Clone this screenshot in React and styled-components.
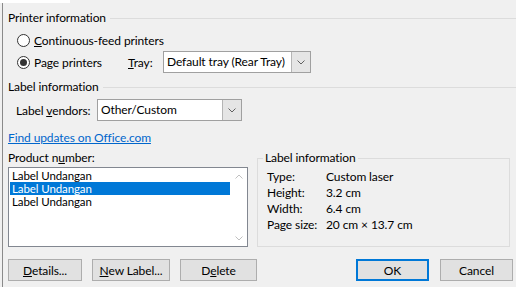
import React from "react";
import styled, { createGlobalStyle } from "styled-components";

const GlobalStyle = createGlobalStyle`
  html, body {
    margin: 0;
    padding: 0;
    background: #f0f0f0;
  }
  body {
    font-family: Lato, "Liberation Sans", sans-serif;
    font-size: 12px;
    letter-spacing: -0.1px;
    color: #000;
  }
`;

const Page = styled.div`
  width: 516px;
  height: 287px;
  overflow: hidden;
  background: #f0f0f0;
`;

const TabEdge = styled.div`
  width: 70px;
  height: 3px;
  background: #fff;
`;

const Window = styled.div`
  margin-left: 2px;
  height: 284px;
  box-sizing: border-box;
  border-left: 1px solid #8a8a8a;
  padding: 7px 0 0 5px;
  display: flex;
  flex-direction: column;
`;

const Header = styled.div`
  display: flex;
  align-items: center;
  gap: 4px;
  height: 16px;
  line-height: 16px;
  margin-top: ${(p) => p.$top || 0}px;
  white-space: nowrap;
  &::after {
    content: "";
    flex: 1;
    height: 1px;
    background: #dcdcdc;
  }
`;

const Row = styled.div`
  display: flex;
  align-items: center;
  height: 22px;
  margin-top: ${(p) => p.$top || 0}px;
  padding-left: ${(p) => p.$indent || 0}px;
  white-space: nowrap;
`;

const Radio = styled.span`
  width: 13px;
  height: 13px;
  box-sizing: border-box;
  border: 1px solid #333;
  border-radius: 50%;
  background: #fff;
  display: flex;
  align-items: center;
  justify-content: center;
  margin-right: 4px;
  flex: none;
  &::after {
    content: "";
    width: 7px;
    height: 7px;
    border-radius: 50%;
    background: ${(p) => (p.$checked ? "#333" : "transparent")};
  }
`;

const Option = styled.span`
  display: flex;
  align-items: center;
  width: ${(p) => (p.$width ? `${p.$width}px` : "auto")};
`;

const FieldLabel = styled.span`
  width: ${(p) => p.$width}px;
  flex: none;
`;

const Combo = styled.div`
  width: ${(p) => p.$width}px;
  height: 22px;
  box-sizing: border-box;
  border: 1px solid #a0a0a0;
  background: #fff;
  display: flex;
  align-items: stretch;
`;

const ComboText = styled.span`
  flex: 1;
  padding-left: 3px;
  line-height: 20px;
  overflow: hidden;
`;

const ComboButton = styled.span`
  width: 18px;
  background: #e5e5e5;
  border-left: 1px solid #b5b5b5;
  display: flex;
  align-items: center;
  justify-content: center;
`;

const Link = styled.a`
  display: block;
  height: 16px;
  line-height: 16px;
  margin-top: 9px;
  color: #0066cc;
  text-decoration: underline;
  align-self: flex-start;
`;

const Lower = styled.div`
  display: flex;
  gap: 9px;
  margin-top: 4px;
`;

const ProductColumn = styled.div`
  width: 240px;
  display: flex;
  flex-direction: column;
`;

const Caption = styled.div`
  height: 16px;
  line-height: 16px;
`;

const ListBox = styled.div`
  margin-top: 1px;
  height: 80px;
  box-sizing: border-box;
  border: 1px solid #828790;
  background: #fff;
  display: flex;
`;

const Items = styled.div`
  flex: 1;
  padding: 1px 0 0 1px;
`;

const Item = styled.div`
  height: 13px;
  line-height: 13px;
  font-size: 11.5px;
  padding-left: 2px;
  background: ${(p) => (p.$selected ? "#0078d7" : "transparent")};
  color: ${(p) => (p.$selected ? "#fff" : "#000")};
`;

const ScrollBar = styled.div`
  width: 17px;
  display: flex;
  flex-direction: column;
  justify-content: space-between;
  align-items: center;
  padding: 6px 0 5px;
`;

const GroupBox = styled.fieldset`
  width: 253px;
  height: 97px;
  box-sizing: border-box;
  margin: 0;
  padding: 3px 5px 0;
  border: 1px solid #dcdcdc;
  legend {
    padding: 0 2px;
    line-height: 16px;
  }
`;

const InfoGrid = styled.div`
  display: grid;
  grid-template-columns: 59px auto;
  grid-auto-rows: 16px;
  line-height: 16px;
  margin-left: 4px;
`;

const Buttons = styled.div`
  display: flex;
  justify-content: space-between;
  margin-top: 12px;
  padding-right: 3px;
`;

const ButtonGroup = styled.div`
  display: flex;
  gap: ${(p) => p.$gap}px;
`;

const Button = styled.button`
  width: ${(p) => p.$width}px;
  height: 22px;
  box-sizing: border-box;
  padding: 0;
  font: inherit;
  letter-spacing: inherit;
  color: #000;
  background: #e1e1e1;
  border: 1px solid ${(p) => (p.$default ? "#0078d7" : "#adadad")};
  box-shadow: ${(p) => (p.$default ? "inset 0 0 0 1px #0078d7" : "none")};
`;

const Chevron = ({ up, color = "#606060" }) => (
  <svg width="8" height="5" viewBox="0 0 8 5">
    <polyline
      points={up ? "0.5,4.5 4,1 7.5,4.5" : "0.5,0.5 4,4 7.5,0.5"}
      fill="none"
      stroke={color}
      strokeWidth="1"
    />
  </svg>
);

const info = [
  ["Type:", "Custom laser"],
  ["Height:", "3.2 cm"],
  ["Width:", "6.4 cm"],
  ["Page size:", "20 cm × 13.7 cm"],
];

export default function App() {
  return (
    <Page>
      <GlobalStyle />
      <TabEdge />
      <Window>
        <Header>Printer information</Header>
        <Row $top={3} $indent={9}>
          <Option>
            <Radio />
            <span>
              <u>C</u>ontinuous-feed printers
            </span>
          </Option>
        </Row>
        <Row $indent={9}>
          <Option $width={111}>
            <Radio $checked />
            <span>
              Pa<u>g</u>e printers
            </span>
          </Option>
          <FieldLabel $width={35}>
            <u>T</u>ray:
          </FieldLabel>
          <Combo $width={148}>
            <ComboText>Default tray (Rear Tray)</ComboText>
            <ComboButton>
              <Chevron />
            </ComboButton>
          </Combo>
        </Row>
        <Header $top={6}>Label information</Header>
        <Row $top={4} $indent={8}>
          <FieldLabel $width={81}>
            Label <u>v</u>endors:
          </FieldLabel>
          <Combo $width={145}>
            <ComboText>Other/Custom</ComboText>
            <ComboButton>
              <Chevron />
            </ComboButton>
          </Combo>
        </Row>
        <Link>Find updates on Office.com</Link>
        <Lower>
          <ProductColumn>
            <Caption>
              Product n<u>u</u>mber:
            </Caption>
            <ListBox>
              <Items>
                <Item>Label Undangan</Item>
                <Item $selected>Label Undangan</Item>
                <Item>Label Undangan</Item>
              </Items>
              <ScrollBar>
                <Chevron up color="#c0c0c0" />
                <Chevron color="#c0c0c0" />
              </ScrollBar>
            </ListBox>
          </ProductColumn>
          <GroupBox>
            <legend>Label information</legend>
            <InfoGrid>
              {info.map(([k, v]) => (
                <React.Fragment key={k}>
                  <span>{k}</span>
                  <span>{v}</span>
                </React.Fragment>
              ))}
            </InfoGrid>
          </GroupBox>
        </Lower>
        <Buttons>
          <ButtonGroup $gap={10}>
            <Button $width={74}>
              <u>D</u>etails...
            </Button>
            <Button $width={78}>
              <u>N</u>ew Label...
            </Button>
            <Button $width={77}>
              D<u>e</u>lete
            </Button>
          </ButtonGroup>
          <ButtonGroup $gap={11}>
            <Button $width={73} $default>
              OK
            </Button>
            <Button $width={73}>Cancel</Button>
          </ButtonGroup>
        </Buttons>
      </Window>
    </Page>
  );
}
